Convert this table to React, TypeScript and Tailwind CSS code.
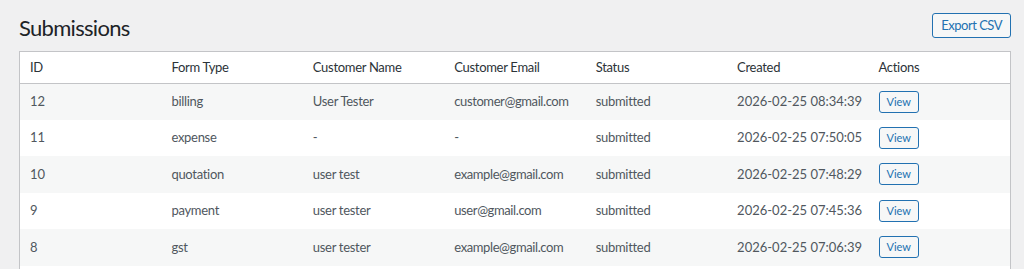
import React from "react";

const rows = [
  { id: "12", type: "billing", name: "User Tester", email: "customer@gmail.com", status: "submitted", created: "2026-02-25 08:34:39" },
  { id: "11", type: "expense", name: "-", email: "-", status: "submitted", created: "2026-02-25 07:50:05" },
  { id: "10", type: "quotation", name: "user test", email: "example@gmail.com", status: "submitted", created: "2026-02-25 07:48:29" },
  { id: "9", type: "payment", name: "user tester", email: "user@gmail.com", status: "submitted", created: "2026-02-25 07:45:36" },
  { id: "8", type: "gst", name: "user tester", email: "example@gmail.com", status: "submitted", created: "2026-02-25 07:06:39" },
];

const headers = ["ID", "Form Type", "Customer Name", "Customer Email", "Status", "Created", "Actions"];

export default function App() {
  return (
    <div
      className="h-[269px] overflow-hidden bg-[#f0f0f1] pl-[19px] pr-[13px] pt-[13px]"
      style={{ fontFamily: '"Segoe UI", Lato, sans-serif' }}
    >
      <div className="flex items-start justify-between">
        <h1 className="text-[22px] leading-[30px] tracking-[-0.7px] text-[#1d2327] font-normal">Submissions</h1>
        <button className="h-[25px] px-[8px] border border-[#2271b1] rounded-[3px] text-[13px] leading-[23px] tracking-[-0.5px] text-[#2271b1] bg-[#f6f7f7]">
          Export CSV
        </button>
      </div>
      <div className="mt-[8px] border border-[#c3c4c7] bg-white pb-[40px]">
        <table className="w-full table-fixed border-collapse text-[13px] whitespace-nowrap">
          <thead>
            <tr className="h-[31px] border-b border-[#c3c4c7]">
              {headers.map((h) => (
                <th key={h} className="px-[10px] text-left font-normal tracking-[-0.3px] text-[#2c3338]">
                  {h}
                </th>
              ))}
            </tr>
          </thead>
          <tbody>
            {rows.map((r, i) => (
              <tr key={r.id} className={`h-[36.5px] ${i % 2 === 0 ? "bg-[#f6f7f7]" : "bg-white"}`}>
                <td className="px-[10px] text-[#50575e]">{r.id}</td>
                <td className="px-[10px] tracking-[-0.3px] text-[#50575e]">{r.type}</td>
                <td className="px-[10px] tracking-[-0.3px] text-[#50575e]">{r.name}</td>
                <td className="px-[10px] tracking-[-0.4px] text-[#50575e]">{r.email}</td>
                <td className="px-[10px] tracking-[-0.3px] text-[#50575e]">{r.status}</td>
                <td className="px-[10px] text-[#50575e]">{r.created}</td>
                <td className="px-[10px]">
                  <button className="h-[22px] px-[7px] border border-[#2271b1] rounded-[3px] text-[11px] leading-[20px] text-[#2271b1] bg-[#f6f7f7]">
                    View
                  </button>
                </td>
              </tr>
            ))}
          </tbody>
        </table>
      </div>
    </div>
  );
}
